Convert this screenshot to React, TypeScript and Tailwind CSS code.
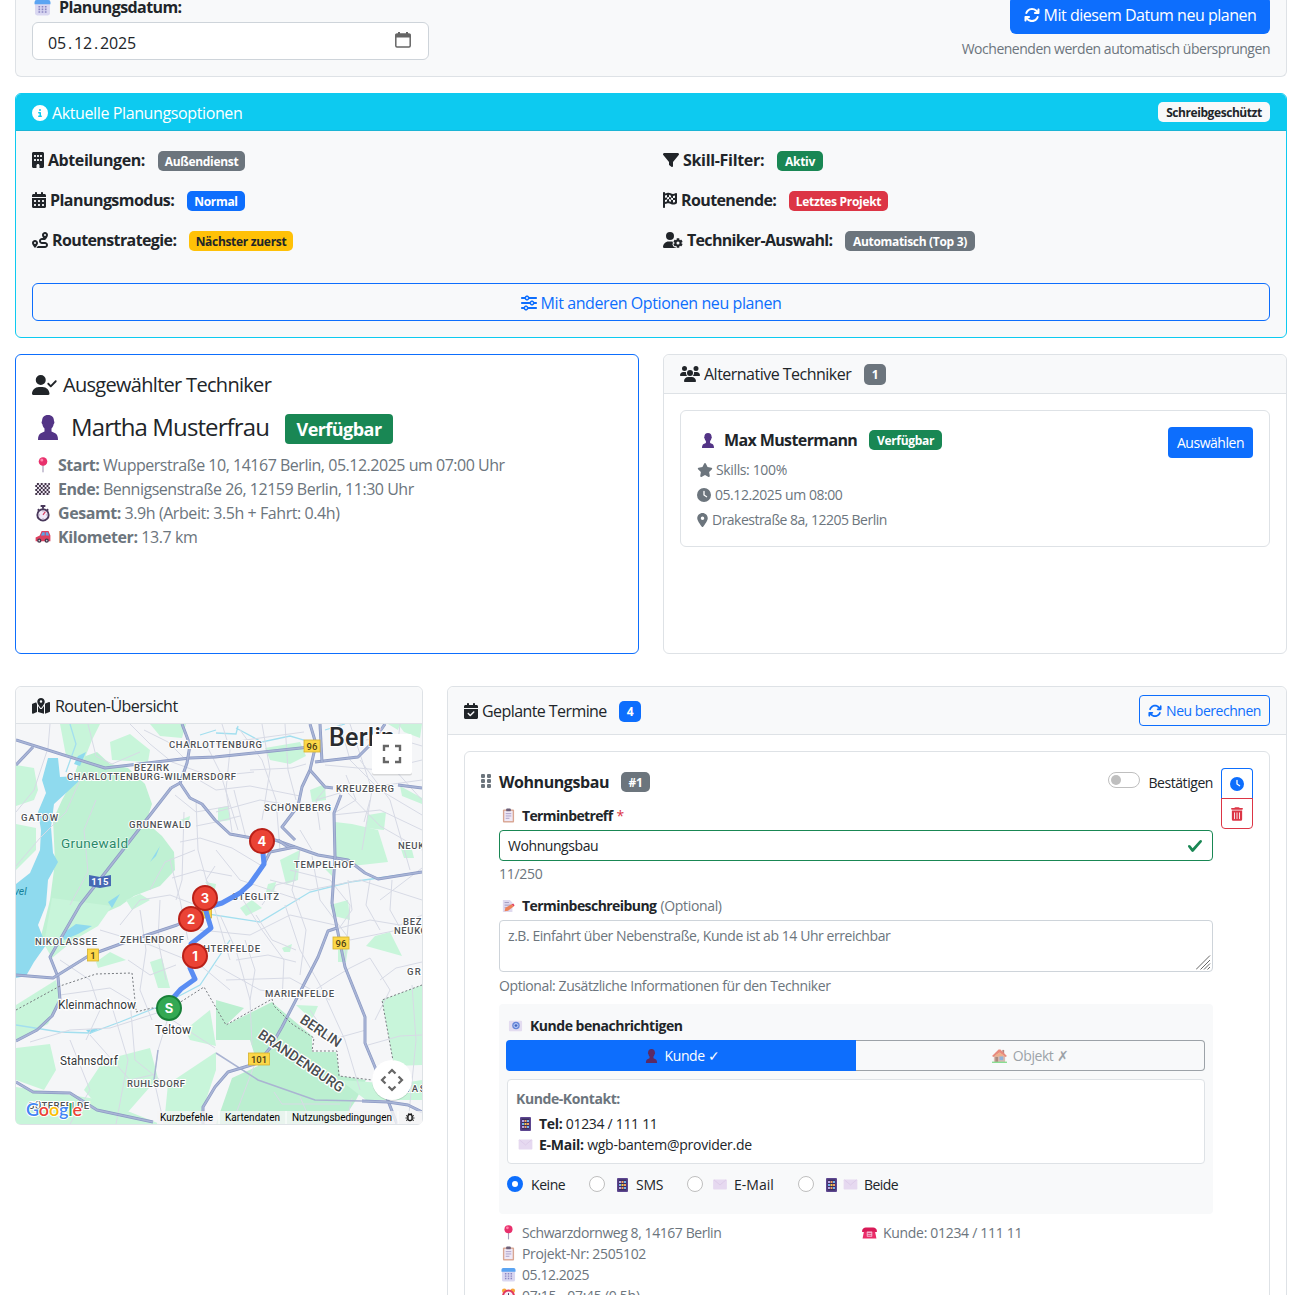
import React from 'react';
import {
    FaArrowsRotate, FaBuilding, FaCalendarCheck, FaCalendarDays, FaCircleInfo, FaClock, FaFilter, FaFlagCheckered,
    FaGripVertical, FaLocationDot, FaMapLocationDot, FaRoute, FaSliders, FaStar, FaTrashCan, FaUserCheck, FaUserGear, FaUsers,
} from 'react-icons/fa6';

interface EmojiProps {
    className?: string;
}

const CalendarEmoji: React.FC<EmojiProps> = ({ className }) => (
    <svg viewBox="0 0 16 16" className={className}>
        <rect x="1" y="1" width="14" height="14.500" rx="2" fill="#d9d7f1" />
        <path d="M0.500 5V3a2 2 0 0 1 2-2h11a2 2 0 0 1 2 2v2z" fill="#5ba4f2" />
        <path d="M5 6.500v7M8 6.500v7M11 6.500v7" stroke="#8a86c4" strokeWidth="1.600" strokeDasharray="1.500 1" fill="none" />
    </svg>
);

const PersonEmoji: React.FC<EmojiProps> = ({ className }) => (
    <svg viewBox="0 0 16 20" className={className}>
        <path d="M8 0c3.200 0 4.800 2 4.800 5 .6.300.4 1.800-.3 2.300-.3 1.700-.9 2.700-1.700 3.400v2.500l3 1.300C15.300 15.300 16 17 16 20H0c0-3 .7-4.700 2.200-5.500l3-1.300v-2.500C4.400 10 3.800 9 3.500 7.300c-.7-.5-.9-2-.3-2.300C3.200 2 4.800 0 8 0z" fill="currentColor" />
    </svg>
);

const PinEmoji: React.FC<EmojiProps> = ({ className }) => (
    <svg viewBox="0 0 16 16" className={className}>
        <path d="M7.400 8h1.200v6.500L8 16l-.6-1.500z" fill="#a9a0bd" />
        <circle cx="8" cy="4.500" r="4.300" fill="#e8306c" />
        <circle cx="6.800" cy="3" r="1.500" fill="#ff84ab" />
    </svg>
);

const FlagEmoji: React.FC<EmojiProps> = ({ className }) => (
    <svg viewBox="0 0 16 14" className={className}>
        <rect width="16" height="14" fill="#e8e1ee" />
        <path d="M1 1h15M-1 3.400h16M1 5.800h15M-1 8.200h16M1 10.600h15M-1 13h16" stroke="#413447" strokeWidth="2.400" strokeDasharray="2.200 2.200" />
    </svg>
);

const StopwatchEmoji: React.FC<EmojiProps> = ({ className }) => (
    <svg viewBox="0 0 16 18" className={className}>
        <path d="M5.500 1h5M8 1v3M2.500 4.500l1.500 1.500M13.500 4.500L12 6" stroke="#49385b" strokeWidth="2" fill="none" />
        <circle cx="8" cy="10.500" r="6" fill="#f0e8f8" stroke="#49385b" strokeWidth="2" />
        <path d="M8 6v1M12.500 10.500h-1M8 15v-1M3.500 10.500h1" stroke="#998bab" strokeWidth="1" />
        <path d="M8 10.500L10.500 7" stroke="#d43b5e" strokeWidth="1.200" />
    </svg>
);

const CarEmoji: React.FC<EmojiProps> = ({ className }) => (
    <svg viewBox="0 0 16 13" className={className}>
        <path d="M0 11V7l4.500-2L6.500 0H14l2 5v6z" fill="#dd4160" />
        <path d="M7.300 1.300h2.500V5H5.800zM11 1.300h2.300l1.300 3.700H11z" fill="#5ba6e8" />
        <circle cx="4" cy="10.500" r="2.300" fill="#41364d" />
        <circle cx="12" cy="10.500" r="2.300" fill="#41364d" />
        <circle cx="4" cy="10.500" r=".9" fill="#ccc" />
        <circle cx="12" cy="10.500" r=".9" fill="#ccc" />
    </svg>
);

const ClipboardEmoji: React.FC<EmojiProps> = ({ className }) => (
    <svg viewBox="0 0 14 16" className={className}>
        <rect x="1" y="1.500" width="12" height="14" rx="1" fill="#d9a693" />
        <rect x="2.500" y="3" width="9" height="11" fill="#efe8f6" />
        <rect x="4.500" y="0.500" width="5" height="3" rx="1" fill="#6d5f78" />
        <path d="M4 6h6M4 8.500h6M4 11h4" stroke="#a79dc6" strokeWidth="1" />
    </svg>
);

const MemoEmoji: React.FC<EmojiProps> = ({ className }) => (
    <svg viewBox="0 0 15 16" className={className}>
        <path d="M1 1h8l3 3v11H1z" fill="#dfd9ef" />
        <path d="M3 4h5M3 7h7M3 10h4" stroke="#9d94ba" strokeWidth="1" />
        <path d="M3 14l1-4 7-4 2.500 2.500-6.500 5z" fill="#ee8058" />
        <path d="M11 6l2-1 1.500 2-1 1.500z" fill="#e0405e" />
    </svg>
);

const AtMailEmoji: React.FC<EmojiProps> = ({ className }) => (
    <svg viewBox="0 0 16 12" className={className}>
        <rect x="1" y="0.500" width="14" height="11" rx="1" fill="#e3dcf0" />
        <circle cx="8.500" cy="5.500" r="4" fill="#6585d8" />
        <circle cx="8.500" cy="5.500" r="2.200" fill="none" stroke="#c5d4fa" strokeWidth=".9" />
        <circle cx="8.500" cy="5.500" r=".7" fill="#2b3f8f" />
    </svg>
);

const MailEmoji: React.FC<EmojiProps> = ({ className }) => (
    <svg viewBox="0 0 16 12" className={className}>
        <rect x="0.500" y="0.500" width="15" height="11" rx=".8" fill="#e6d9f0" />
        <path d="M1.500 1l6.500 5.500L14.500 1" stroke="#dccbe8" strokeWidth="1" fill="none" />
    </svg>
);

const PhoneEmoji: React.FC<EmojiProps> = ({ className }) => (
    <svg viewBox="0 0 11 14" className={className}>
        <rect width="11" height="14" rx="1" fill="#5d4690" />
        <rect x="1.500" y="1.500" width="8" height="11" fill="#3a2c5e" />
        <path d="M2 3h2v2H2zM2 9h2v2H2z" fill="#b9a5e6" />
        <path d="M4.500 3h2v2h-2zM7 6h2v2H7zM4.500 9h2v2h-2z" fill="#f0a069" />
        <path d="M7 3h2v2H7zM2 6h2v2H2zM7 9h2v2H7z" fill="#74b5f0" />
        <path d="M4.500 6h2v2h-2z" fill="#f2cb4c" />
    </svg>
);

const HouseEmoji: React.FC<EmojiProps> = ({ className }) => (
    <svg viewBox="0 0 16 15" className={className}>
        <path d="M2 7h12v7H2z" fill="#c99a8c" />
        <path d="M11 1h2v4h-2z" fill="#8d4b3f" />
        <path d="M0 7.500L7 .500h2l7 7-1.500 1L8 4l-6.500 4.500z" fill="#e0503c" />
        <path d="M2 8L8 3.500L14 8z" fill="#e88a55" />
        <path d="M8 8h4v4H8z" fill="#5b8fca" />
        <path d="M3.500 8.500h3V14h-3z" fill="#86513e" />
        <path d="M0 13.500h16V15H0z" fill="#4fd05c" />
    </svg>
);

const TelephoneEmoji: React.FC<EmojiProps> = ({ className }) => (
    <svg viewBox="0 0 16 13" className={className}>
        <path d="M0 4c0-2 2-3.500 4-3.500h8c2 0 4 1.500 4 3.500v1.500H0z" fill="#d81a57" />
        <path d="M2 5h12l1.500 7.500H.5z" fill="#ea2c68" />
        <rect x="5" y="5" width="6" height="5.500" rx=".5" fill="#f4b5cf" />
        <path d="M6 7h4M6 9h4" stroke="#d81a57" strokeWidth=".8" />
    </svg>
);

const AlarmEmoji: React.FC<EmojiProps> = ({ className }) => (
    <svg viewBox="0 0 16 16" className={className}>
        <circle cx="3.500" cy="3" r="2.500" fill="#f6a43a" />
        <circle cx="12.500" cy="3" r="2.500" fill="#f6a43a" />
        <circle cx="8" cy="8.500" r="5.800" fill="#f5eefa" stroke="#e2365f" strokeWidth="2.200" />
        <path d="M8 5.500v3l2 1" stroke="#46385a" strokeWidth="1" fill="none" />
    </svg>
);

interface BadgeProps {
    color: string;
    className?: string;
    children: React.ReactNode;
}

const Badge: React.FC<BadgeProps> = ({ color, className = '', children }) => (
    <span className={`inline-flex h-5 items-center justify-center rounded-[5px] pt-px text-xs font-bold tracking-[-0.026em] whitespace-nowrap ${color} ${className}`}>
        {children}
    </span>
);

interface OptionProps {
    icon: React.ReactNode;
    label: string;
    labelClass: string;
    badge: string;
    badgeClass: string;
}

const OPTIONS: OptionProps[] = [
    { icon: <FaBuilding className="h-4 w-3" />, label: 'Abteilungen:', labelClass: 'w-[97px] tracking-[-0.026em]', badge: 'Außendienst', badgeClass: 'w-[87px] bg-[#6c757d] text-white' },
    { icon: <FaFilter className="h-4 w-4" />, label: 'Skill-Filter:', labelClass: 'w-[81px] tracking-[-0.02em]', badge: 'Aktiv', badgeClass: 'w-[46px] bg-[#198754] text-white' },
    { icon: <FaCalendarDays className="h-4 w-3.5" />, label: 'Planungsmodus:', labelClass: 'w-[124px] tracking-[-0.034em]', badge: 'Normal', badgeClass: 'w-[58px] bg-[#0d6efd] text-white' },
    { icon: <FaFlagCheckered className="h-4 w-3.5" />, label: 'Routenende:', labelClass: 'w-[95px] tracking-[-0.038em]', badge: 'Letztes Projekt', badgeClass: 'w-[99px] bg-[#dc3545] text-white' },
    { icon: <FaRoute className="h-4 w-4" />, label: 'Routenstrategie:', labelClass: 'w-[124px] tracking-[-0.038em]', badge: 'Nächster zuerst', badgeClass: 'w-[104px] bg-[#ffc107] text-[#212529]' },
    { icon: <FaUserGear className="h-4 w-5" />, label: 'Techniker-Auswahl:', labelClass: 'w-[145px] tracking-[-0.042em]', badge: 'Automatisch (Top 3)', badgeClass: 'w-[130px] bg-[#6c757d] text-white' },
];

const MINOR_ROADS = [
    'M16 812L34 790L48 748L50 724', 'M16 866L40 838L66 812L80 780', 'M88 724L96 756L112 764L140 752', 'M70 905L88 872L84 830L96 800',
    'M130 724L150 744L172 762L210 776', 'M192 776L216 790L250 786L300 796', 'M196 800L198 850L212 900L230 960', 'M180 842L200 838L232 848L262 866',
    'M204 740L220 772L238 830', 'M222 724L230 750L226 790L232 832', 'M240 730L262 760L276 800L280 850', 'M216 744L260 738L304 732', 'M216 812L260 800L330 812',
    'M262 724L270 770L262 820', 'M316 800L350 790L422 780', 'M333 815L380 810L422 830', 'M345 790L380 826L422 850', 'M360 760L390 800L410 870',
    'M325 765L380 770L422 760', 'M340 724L350 760L380 790L422 815', 'M300 850L292 890L306 930L300 975', 'M312 856L320 900L350 940L422 925',
    'M270 880L310 890L360 880L422 900', 'M240 895L262 930L284 960L282 1000', 'M216 850L240 880L300 900', 'M285 724L288 770L296 800',
    'M170 860L180 900L188 940', 'M150 890L165 862L195 850', 'M120 925L140 900L170 895L196 905', 'M100 930L150 945L200 965L230 990',
    'M140 910L146 950L140 990L152 1020', 'M160 900L158 940L166 980', 'M60 995L110 988L130 1000L135 1060L160 1080', 'M60 960L90 980L100 1010L86 1040',
    'M30 1042L70 1030L110 1028L160 1012', 'M70 1040L90 1090L70 1124', 'M90 1035L130 1080L156 1074', 'M168 1018L158 1050L154 1080L164 1124',
    'M110 1000L128 1060L116 1124', 'M160 1012L215 1048', 'M220 915L236 950L250 1000L252 1045', 'M200 930L250 935L290 915L335 925',
    'M215 965L260 990L300 995', 'M340 928L370 920L400 925L422 915', 'M350 968L370 958L390 990L375 1020', 'M300 1000L330 980L350 968',
    'M285 905L300 950L320 985L345 1040L360 1090', 'M400 724L395 770L422 800', 'M368 1045L400 1036L422 1035', 'M310 1010L330 1040L366 1030',
    'M412 985L416 1040L408 1124', 'M254 1066L232 1124', 'M300 1097L312 1124', 'M352 1098L346 1124', 'M274 1092L282 1104L340 1104', 'M380 900L422 868',
    'M380 980L396 968L422 962', 'M245 940L255 970L250 1000', 'M226 980L290 978L330 1000', 'M290 870L330 880L350 905L345 960', 'M350 724L372 790L362 850',
    'M175 795L196 812L230 806', 'M184 812L182 880L176 900', 'M196 826L216 822L240 816', 'M215 866L206 880L216 892', 'M172 878L200 870L232 876',
    'M234 790L246 838', 'M250 770L292 768L306 764', 'M216 776L254 772', 'M320 830L316 800L326 788', 'M300 830L312 850', 'M348 880L352 910L338 930',
    'M370 880L366 905L380 930', 'M392 880L390 910L404 935', 'M366 740L388 736L422 746', 'M346 775L356 800L336 812', 'M370 800L364 822',
    'M262 905L276 885L296 880', 'M256 915L272 940L296 950', 'M236 960L268 955L296 962', 'M144 730L168 742L186 760', 'M128 960L150 975L176 965',
];

const GREEN_AREAS = [
    'M16 765L34 768L38 790L34 800L16 806z', 'M16 824L36 828L36 850L16 870z', 'M60 724L100 724L92 740L84 760L66 756z', 'M110 742L130 734L150 750L148 762L112 760z',
    'M150 724L186 724L182 738L160 736z', 'M265 748L300 742L306 756L290 764L270 760z', 'M335 822L352 824L378 830L388 862L352 866L335 858z',
    'M280 860L300 850L298 880L286 884z', 'M368 815L386 812L384 830L366 828z', 'M310 790L325 784L326 800L312 802z', 'M400 786L422 798L422 804L402 796z',
    'M398 724L422 724L420 738L404 732z', 'M400 846L410 842L414 858L404 858z', 'M375 936L390 932L402 956L366 946z', 'M330 905L348 900L350 920L334 916z',
    'M338 950L348 948L346 962L338 962z', 'M282 948L292 944L290 952L284 952z', 'M382 1000L422 985L422 1065L394 1066z',
    'M296 1005L318 1006L312 1020z', 'M16 1048L50 1044L56 1070L44 1090L16 1080z', 'M16 1087L90 1098L130 1112L160 1124L16 1124z', 'M104 1060L150 1048L158 1078L142 1096L128 1112L96 1104L84 1090z',
    'M168 1084L216 1052L216 1070L198 1124L164 1124z', 'M16 1005L56 980L60 1000L48 1024L16 1040z', 'M150 962L162 958L170 988L158 988z', 'M96 962L110 952L126 960L98 968z',
    'M185 1030L210 1010L216 1046L190 1040z', 'M126 900L140 894L150 900L132 910z', 'M340 1080L396 1084L422 1080L422 1100L366 1100z',
    'M52 898L112 906L98 926L74 940L52 958L44 944z', 'M218 808L228 806L230 820L218 822z', 'M180 820L190 816L188 826z', 'M268 884L276 882L274 892L266 892z',
    'M240 908L252 900L262 908L246 916z', 'M388 724L400 724L398 730z', 'M205 882L216 884L214 894z', 'M324 868L332 868L332 876z',
];

const HIGHWAYS = [
    'M16 740L105 768L190 758L215 757L310 747', 'M16 765L33 747', 'M171 788L126 846L80 905L50 957L58 977L60 1000L52 1016L37 1030L16 1041',
    'M182 724L190 745L187 763L180 783L171 788', 'M180 783L190 798L202 804L215 820L230 834L252 838L275 840L295 847L318 855L348 860L365 873L378 879L422 872',
    'M310 724L316 744L310 770L302 787L298 806L282 827L295 840', 'M310 770L325 787L333 788M341 795L334 813L335 857L332 903L337 928L345 967L365 1017L365 1043L375 1067L397 1124',
    'M315 762L358 757L372 743L385 724', 'M337 928L328 931L318 957L282 1027L270 1048L258 1063L228 1072L215 1087L203 1107L203 1124',
    'M16 975L53 978L90 955L123 943L177 925L206 910', 'M16 1082L33 1092L70 1093L97 1110L153 1122', 'M295 847L270 852L262 868', 'M278 840L288 847',
    'M362 1101L388 1102L408 1105L422 1112', 'M320 724L322 762', 'M398 785L422 788',
];

interface PlaceProps {
    x: number;
    y: number;
    w: number;
    children: React.ReactNode;
}

// District names, spaced out to the width they take on the map
const District: React.FC<PlaceProps> = ({ x, y, w, children }) => (
    <text x={x} y={y} textLength={w} fontSize="9.500" fontWeight="500" fill="#4f5256" stroke="#fff" strokeWidth="2" paintOrder="stroke">
        {children}
    </text>
);

const Town: React.FC<PlaceProps> = ({ x, y, w, children }) => (
    <text x={x} y={y} textLength={w} fontSize="12" fill="#333639" stroke="#fff" strokeWidth="2.500" paintOrder="stroke">
        {children}
    </text>
);

const Shield: React.FC<PlaceProps> = ({ x, y, w, children }) => (
    <g>
        <rect x={x - w / 2} y={y - 6} width={w} height="12" fill="#fcd748" stroke="#d5b12e" strokeWidth=".8" />
        <text x={x} y={y + 3.5} fontSize="9.500" fontWeight="500" fill="#4e4114" textAnchor="middle">{children}</text>
    </g>
);

const STOPS = [
    { x: 262, y: 841, label: '4' },
    { x: 205, y: 898, label: '3' },
    { x: 191, y: 919, label: '2' },
    { x: 195, y: 956, label: '1' },
];

const RouteMap: React.FC = () => (
    <svg viewBox="16 724 406 400" className="block h-[400px] w-[406px] rounded-b-[3px] font-[Roboto,sans-serif]">
        <rect x="16" y="724" width="406" height="400" fill="#f5f6f8" />
        <path d="M80 758L97 752L110 764L128 768L145 784L152 804L146 822L162 836L174 852L175 870L160 886L134 896L120 906L84 922L66 924L54 945L40 940L50 900L55 862L53 820L62 800L72 782z" fill="#bff1d3" />
        <path d="M216 1000L244 1008L226 1025L272 1002L274 1004L312 1036L312 1052L336 1052L340 1076L366 1080L356 1100L340 1124L216 1124L232 1078L258 1066L250 1040L216 1040z" fill="#bbefd0" />
        {GREEN_AREAS.map((d) => (
            <path key={d} d={d} fill="#c8f5da" />
        ))}
        <path d="M48 758H58L60 777L77 776L80 780L66 793L54 804L51 827L53 853L58 862L48 880L46 905L38 925L46 945L34 962L26 976L16 978V884L30 873L40 850L41 830L38 812L46 793L42 780z" fill="#8fdaee" />
        <path d="M78 756L86 752L80 766L74 764zM150 862L160 846L156 856L148 864zM108 902L120 894L112 908zM86 1030L100 1028L90 1034zM62 934L76 924L92 926L78 934L64 940z" fill="#8fdaee" />
        <path d="M70 724L76 744L66 772M216 733L236 734L238 726M236 728L262 742L290 736L304 740M325 730L345 724M16 1025L60 1032L90 1033L120 1022L160 1006L200 985L230 940M195 912L260 922L310 892L350 882L422 872M200 735L216 730" stroke="#a3dfef" strokeWidth="1.300" fill="none" />
        {MINOR_ROADS.map((d) => (
            <path key={d} d={d} fill="none" stroke="#d7dae5" strokeWidth="1" strokeLinejoin="round" />
        ))}
        <path d="M216 1053L258 1080L315 1100L362 1101M158 1050L154 1080" fill="none" stroke="#aab4d2" strokeWidth="1.500" />
        {HIGHWAYS.map((d) => (
            <g key={d} fill="none" strokeLinejoin="round">
                <path d={d} stroke="#8c9ac4" strokeWidth="3" />
                <path d={d} stroke="#a9b5d6" strokeWidth="1.600" />
            </g>
        ))}
        <path d="M16 1010L60 986L96 974L132 973L136 1010M136 1012L152 1008L168 1010L204 987L226 1025L272 999L274 1006L292 1024L314 1038L312 1051L337 1051L339 1076L372 1080M394 1066L382 1000L422 985" fill="none" stroke="#777b80" strokeWidth="1" strokeDasharray="2 2" />

        <text x="329" y="746" fontSize="25" textLength="66" fontWeight="500" fill="#2a2c2f" stroke="#fff" strokeWidth="2" paintOrder="stroke">Berlin</text>
        <District x={169} y={748} w={93}>CHARLOTTENBURG</District>
        <District x={134} y={771} w={35}>BEZIRK</District>
        <District x={67} y={780} w={169}>CHARLOTTENBURG-WILMERSDORF</District>
        <District x={336} y={792} w={58}>KREUZBERG</District>
        <District x={264} y={811} w={67}>SCHÖNEBERG</District>
        <District x={21} y={821} w={37}>GATOW</District>
        <District x={129} y={828} w={62}>GRUNEWALD</District>
        <District x={398} y={849} w={52}>NEUKÖLLN</District>
        <District x={294} y={868} w={60}>TEMPELHOF</District>
        <District x={232} y={900} w={47}>STEGLITZ</District>
        <District x={35} y={945} w={62}>NIKOLASSEE</District>
        <District x={120} y={943} w={64}>ZEHLENDORF</District>
        <District x={187} y={952} w={73}>LICHTERFELDE</District>
        <District x={403} y={925} w={35}>BEZIRK</District>
        <District x={394} y={934} w={52}>NEUKÖLLN</District>
        <District x={407} y={975} w={62}>GROPIUSST</District>
        <District x={265} y={997} w={69}>MARIENFELDE</District>
        <District x={127} y={1087} w={58}>RUHLSDORF</District>
        <District x={402} y={1092} w={31}>WASS</District>
        <District x={28} y={1109} w={61}>GÜTERFELDE</District>
        <text x="61" y="848" fontSize="13.500" textLength="67" fill="#2b8869" stroke="#e4faee" strokeWidth="1.500" paintOrder="stroke">Grunewald</text>
        <text x="14" y="895" fontSize="10.500" fontStyle="italic" fill="#168199">vel</text>
        <Town x={58} y={1009} w={78}>Kleinmachnow</Town>
        <Town x={155} y={1034} w={36}>Teltow</Town>
        <Town x={60} y={1065} w={58}>Stahnsdorf</Town>
        <g fontSize="14" fontWeight="500" fill="#4a4d50" stroke="#fff" strokeWidth="2.500" paintOrder="stroke">
            <text transform="translate(299 1022) rotate(34)" textLength="46">BERLIN</text>
            <text transform="translate(257 1037) rotate(34)" textLength="100">BRANDENBURG</text>
        </g>
        <path d="M89 875L100 877L111 875V886L100 888L89 886z" fill="#4669b4" />
        <text x="100" y="885" fontSize="9.500" fontWeight="700" fill="#fff" textAnchor="middle" letterSpacing=".4">115</text>
        <Shield x={312} y={746} w={16}>96</Shield>
        <Shield x={341} y={943} w={16}>96</Shield>
        <Shield x={93} y={955} w={11}>1</Shield>
        <Shield x={207} y={912} w={9}>1</Shield>
        <Shield x={259} y={1059} w={21}>101</Shield>

        <path d="M262 842L264 864L250 884L240 893L222 903L205 908L211 928L191 944L190 968L195 979L181 989L173 998L169 1008" fill="none" stroke="#5a8df3" strokeWidth="5" strokeLinejoin="round" />
        <g fontFamily="Inter" fontWeight="700" fontSize="13" textAnchor="middle">
            <circle cx="169" cy="1008" r="12" fill="#34a853" stroke="#188038" strokeWidth="2" />
            <text x="169" y="1012.500" fill="#fff">S</text>
            {[...STOPS].reverse().map((stop) => (
                <g key={stop.label}>
                    <circle cx={stop.x} cy={stop.y} r="12" fill="#ea4335" stroke="#b92018" strokeWidth="2" />
                    <text x={stop.x} y={stop.y + 4.5} fill="#fff">{stop.label}</text>
                </g>
            ))}
        </g>

        <rect x="372" y="735" width="40" height="40.500" rx="2" fill="#000" opacity=".12" />
        <rect x="372" y="734" width="40" height="40" rx="2" fill="#fff" />
        <path d="M384 751V746H389M395 746H400V751M400 757V762H395M389 762H384V757" fill="none" stroke="#666" strokeWidth="2.400" />
        <circle cx="392" cy="1081" r="20" fill="#000" opacity=".12" />
        <circle cx="392" cy="1080" r="20" fill="#fff" />
        <path d="M388.500 1073.500L392 1070L395.500 1073.500M388.500 1086.500L392 1090L395.500 1086.500M385.500 1076.500L382 1080L385.500 1083.500M398.500 1076.500L402 1080L398.500 1083.500" fill="none" stroke="#666" strokeWidth="2.200" />

        <rect x="157" y="1111" width="265" height="13" fill="#f5f5f5" opacity=".8" />
        <g fontSize="10" fill="#000">
            <text x="160" y="1121" textLength="53">Kurzbefehle</text>
            <text x="225" y="1121" textLength="55">Kartendaten</text>
            <text x="292" y="1121" textLength="100">Nutzungsbedingungen</text>
        </g>
        <path d="M219 1111V1124M286 1111V1124M398 1111V1124" stroke="#fff" strokeWidth="1" />
        <g fill="none" stroke="#111">
            <rect x="408" y="1114.500" width="4" height="6" rx="1.500" strokeWidth="1.300" />
            <path d="M406 1115.500L408 1116.500M414 1115.500L412 1116.500M405.500 1118H408M412 1118H414.500M406 1120.500L408 1119.500M414 1120.500L412 1119.500M408.500 1113L409.500 1114.500M411.500 1113L410.500 1114.500" strokeWidth=".9" />
        </g>
        <text x="26" y="1116" fontSize="18" fontWeight="600" textLength="56" fontFamily="Lato" stroke="#fff" strokeWidth="2" paintOrder="stroke">
            <tspan fill="#4285f4">G</tspan>
            <tspan fill="#ea4335">o</tspan>
            <tspan fill="#fbbc05">o</tspan>
            <tspan fill="#4285f4">g</tspan>
            <tspan fill="#34a853">l</tspan>
            <tspan fill="#ea4335">e</tspan>
        </text>
    </svg>
);

const PlanningDate: React.FC = () => (
    <div className="flex h-[77px] justify-between rounded-b-md border border-t-0 border-[#dee2e6] bg-[#f8f9fa] px-4">
        <div>
            <div className="-mt-[5px] flex h-6 items-center pl-[2px] font-bold">
                <CalendarEmoji className="mr-2 h-[17px] w-[17px]" />
                <span className="tracking-[-0.036em]">Planungsdatum:</span>
            </div>
            <div className="mt-[3px] flex h-[38px] w-[397px] items-center justify-between rounded-md border border-[#ced4da] bg-white pr-[17px] pl-[15px]">
                <span className="pt-[3px] tracking-[-0.01em] [word-spacing:-2px]">05 . 12 . 2025</span>
                <svg viewBox="0 0 16 16" className="-mt-[2px] h-4 w-4">
                    <rect x=".8" y="2" width="14.400" height="13" rx="1.200" fill="none" stroke="#666" strokeWidth="1.500" />
                    <path d="M.5 2H15.500V5.500H.5zM3 0h2v3H3zM11 0h2v3h-2z" fill="#666" />
                </svg>
            </div>
        </div>
        <div className="flex flex-col items-end">
            <button className="-mt-1 flex h-[38px] w-[260px] items-center justify-center gap-1 rounded-md bg-[#0d6efd] text-white">
                <FaArrowsRotate className="h-4 w-4" />
                <span className="tracking-[-0.03em]">Mit diesem Datum neu planen</span>
            </button>
            <span className="mt-[5px] text-sm tracking-[-0.034em] text-[#6c757d]">Wochenenden werden automatisch übersprungen</span>
        </div>
    </div>
);

const PlanningOptions: React.FC = () => (
    <div className="mt-4 h-[245px] rounded-md border border-[#0dcaf0] bg-[#f8f9fa]">
        <div className="flex h-[37px] items-center justify-between rounded-t-[5px] border-b border-[#1bb5d5] bg-[#0dcaf0] px-4 text-white">
            <span className="flex items-center gap-1 pt-[2px]">
                <FaCircleInfo className="h-4 w-4" />
                <span className="tracking-[-0.024em]">Aktuelle Planungsoptionen</span>
            </span>
            <Badge color="bg-[#f8f9fa] text-[#212529]" className="w-[112px] tracking-[-0.036em]">Schreibgeschützt</Badge>
        </div>
        <div className="px-4 pt-[17px]">
            <div className="grid grid-cols-[631px_1fr] gap-y-4">
                {OPTIONS.map((option) => (
                    <div key={option.label} className="flex h-6 items-center">
                        {option.icon}
                        <span className={`ml-1 font-bold whitespace-nowrap ${option.labelClass}`}>{option.label}</span>
                        <Badge color={option.badgeClass} className="mt-[2px] ml-[13px]">{option.badge}</Badge>
                    </div>
                ))}
            </div>
            <button className="mt-[31px] flex h-[38px] w-full items-center justify-center gap-1 rounded-md border border-[#0d6efd] pt-[2px] text-[#0d6efd]">
                <FaSliders className="h-4 w-4" />
                <span className="tracking-[-0.026em]">Mit anderen Optionen neu planen</span>
            </button>
        </div>
    </div>
);

const SelectedTechnician: React.FC = () => (
    <div className="h-[300px] w-[624px] rounded-md border border-[#0d6efd] px-4 pt-4">
        <div className="flex h-7 items-center text-xl">
            <FaUserCheck className="mr-[6px] h-5 w-[25px]" />
            <span className="tracking-[-0.035em]">Ausgewählter Techniker</span>
        </div>
        <div className="mt-[10px] flex h-9 items-center">
            <PersonEmoji className="ml-[5px] h-[25px] w-[22px] text-[#533486]" />
            <span className="ml-[12px] w-[198px] text-2xl tracking-[-0.037em] whitespace-nowrap">Martha Musterfrau</span>
            <span className="mt-[3px] ml-4 flex h-[30px] w-[108px] items-center justify-center rounded bg-[#198754] text-lg font-bold tracking-[-0.03em] text-white">
                Verfügbar
            </span>
        </div>
        <div className="mt-2 leading-6 tracking-[-0.03em] text-[#6c757d]">
            <div className="flex items-center">
                <PinEmoji className="mr-[7px] ml-[3px] h-4 w-4" />
                <span><b>Start:</b> Wupperstraße 10, 14167 Berlin, 05.12.2025 um 07:00 Uhr</span>
            </div>
            <div className="flex items-center">
                <FlagEmoji className="mr-[7px] ml-[3px] h-3 w-4" />
                <span><b>Ende:</b> Bennigsenstraße 26, 12159 Berlin, 11:30 Uhr</span>
            </div>
            <div className="flex items-center">
                <StopwatchEmoji className="mr-[7px] ml-[3px] h-[17px] w-4" />
                <span className="tracking-[-0.027em]"><b>Gesamt:</b> 3.9h (Arbeit: 3.5h + Fahrt: 0.4h)</span>
            </div>
            <div className="flex items-center">
                <CarEmoji className="mr-[7px] ml-[3px] h-3 w-4" />
                <span className="tracking-[-0.026em]"><b>Kilometer:</b> 13.7 km</span>
            </div>
        </div>
    </div>
);

const AlternativeTechnicians: React.FC = () => (
    <div className="h-[300px] w-[624px] rounded-md border border-[#dee2e6]">
        <div className="flex h-[39px] items-center rounded-t-md border-b border-[#dee2e6] bg-[#f8f9fa] px-4">
            <FaUsers className="h-4 w-5" />
            <span className="ml-1 w-[148px] whitespace-nowrap">Alternative Techniker</span>
            <Badge color="bg-[#6c757d] text-white" className="mt-px ml-3 h-[21px] w-[22px]">1</Badge>
        </div>
        <div className="m-4 flex h-[137px] items-start justify-between rounded-md border border-[#dee2e6] p-4">
            <div>
                <div className="mt-px flex h-6 items-center">
                    <PersonEmoji className="ml-1 h-[15px] w-[14px] text-[#533486]" />
                    <span className="ml-[9px] w-[133px] font-bold tracking-[-0.038em] whitespace-nowrap">Max Mustermann</span>
                    <Badge color="bg-[#198754] text-white" className="ml-3 w-[73px]">Verfügbar</Badge>
                </div>
                <div className="mt-[5px] text-sm leading-[25px] tracking-[-0.026em] text-[#6c757d]">
                    <div className="flex items-center gap-[3px]"><FaStar className="h-[14px] w-4" />Skills: 100%</div>
                    <div className="flex items-center gap-1 tracking-[-0.032em]"><FaClock className="h-[14px] w-[14px]" />05.12.2025 um 08:00</div>
                    <div className="flex items-center gap-1 tracking-[-0.037em]"><FaLocationDot className="h-[14px] w-[11px]" />Drakestraße 8a, 12205 Berlin</div>
                </div>
            </div>
            <button className="h-[31px] w-[85px] rounded bg-[#0d6efd] pt-px text-sm tracking-[-0.034em] text-white">Auswählen</button>
        </div>
    </div>
);

const NotifyBox: React.FC = () => (
    <div className="mt-2 h-[210px] rounded bg-[#f8f9fa] pt-[11px] pr-2 pl-[7px]">
        <div className="flex h-[21px] items-center font-bold tracking-[-0.034em]">
            <AtMailEmoji className="mr-[7px] ml-[2px] h-[12px] w-[15px]" />
            <span>Kunde benachrichtigen</span>
        </div>
        <div className="mt-1 flex h-[31px]">
            <button className="flex w-[350px] items-center justify-center rounded-l bg-[#0d6efd] pl-[2px] text-white">
                <PersonEmoji className="mr-[7px] h-[14px] w-[13px] text-[#5c2a63]" />
                Kunde ✓
            </button>
            <button className="flex flex-1 items-center justify-center rounded-r border border-l-0 border-[#6c757d] text-[#6c757d] opacity-65">
                <HouseEmoji className="mr-[6px] h-[14px] w-[15px]" />
                Objekt ✗
            </button>
        </div>
        <div className="mt-2 ml-px h-[85px] rounded border border-[#dee2e6] bg-white pt-2 pl-2">
            <div className="font-bold tracking-[-0.03em] text-[#6c757d]">Kunde-Kontakt:</div>
            <div className="mt-1 flex items-center tracking-[-0.022em]">
                <PhoneEmoji className="mr-2 ml-1 h-[14px] w-[11px]" />
                <span><b>Tel:</b> 01234 / 111 11</span>
            </div>
            <div className="flex items-center tracking-[-0.018em]">
                <MailEmoji className="mr-[6px] ml-[2px] h-[11px] w-[15px]" />
                <span><b>E-Mail:</b> wgb-bantem@provider.de</span>
            </div>
        </div>
        <div className="mt-[9px] flex h-[22px] items-center">
            <span className="ml-px h-4 w-4 rounded-full border-[5px] border-[#0d6efd] bg-white" />
            <span className="ml-2 w-[58px] pt-px">Keine</span>
            <span className="h-4 w-4 rounded-full border border-[#bfbfbf] bg-white" />
            <PhoneEmoji className="mt-px ml-3 h-[14px] w-[11px]" />
            <span className="ml-2 w-[51px] pt-px tracking-[-0.02em]">SMS</span>
            <span className="h-4 w-4 rounded-full border border-[#bfbfbf] bg-white" />
            <MailEmoji className="mt-px ml-[9px] h-[11px] w-4" />
            <span className="ml-[6px] w-[64px] pt-px tracking-[0em]">E-Mail</span>
            <span className="h-4 w-4 rounded-full border border-[#bfbfbf] bg-white" />
            <PhoneEmoji className="mt-px ml-3 h-[14px] w-[11px]" />
            <MailEmoji className="mt-px ml-[6px] h-[11px] w-[15px]" />
            <span className="ml-[6px] pt-px tracking-[-0.04em]">Beide</span>
        </div>
    </div>
);

const AppointmentForm: React.FC = () => (
    <div className="w-[714px] text-sm leading-[21px] tracking-[-0.031em]">
        <div className="flex h-7 items-center">
            <span className="w-[109px] text-base font-bold">Wohnungsbau</span>
            <Badge color="bg-[#6c757d] text-white" className="ml-[13px] w-[29px]">#1</Badge>
            <span className="-mt-1 ml-auto flex h-4 w-8 items-center rounded-full border border-[#bfbfbf] pl-[2px]">
                <span className="h-[10px] w-[10px] rounded-full bg-[#bfbfbf]" />
            </span>
            <span className="ml-2 w-[65px] text-right">Bestätigen</span>
        </div>
        <div className="mt-2 flex h-[22px] items-center">
            <ClipboardEmoji className="mr-[7px] ml-[3px] h-[15px] w-[13px]" />
            <b className="tracking-[-0.045em]">Terminbetreff</b>
            <span className="ml-1 text-[#dc3545]">*</span>
        </div>
        <div className="mt-1 flex h-[31px] items-center justify-between rounded border border-[#198754] pr-[9px] pl-2">
            Wohnungsbau
            <svg viewBox="0 0 8 8" className="h-4 w-4">
                <path fill="#198754" d="M2.300 6.730.6 4.530c-.4-1.040.46-1.400 1.100-.8l1.100 1.400 3.400-3.800c.6-.63 1.600-.27 1.200.7l-4 4.600c-.43.500-.8.400-1.100.1z" />
            </svg>
        </div>
        <div className="mt-[2px] tracking-[-0.02em] text-[#6c757d]">11/250</div>
        <div className="mt-[11px] flex items-center">
            <MemoEmoji className="mr-[7px] ml-[3px] h-[14px] w-[13px]" />
            <b className="tracking-[-0.04em]">Terminbeschreibung</b>
            <span className="ml-1 tracking-[-0.024em] text-[#6c757d]">(Optional)</span>
        </div>
        <div className="relative mt-1 h-[52px] rounded border border-[#ced4da] px-2 pt-1 text-[#6c757d]">
            z.B. Einfahrt über Nebenstraße, Kunde ist ab 14 Uhr erreichbar
            <svg viewBox="0 0 15 15" className="absolute right-px bottom-px h-[15px] w-[15px]">
                <path d="M0 14.500L14 .5M4.500 14.500L14 5M8 14.500L14 8.500M11.500 14.500L14 12" stroke="#666" strokeWidth="1" />
            </svg>
        </div>
        <div className="mt-[3px] tracking-[-0.029em] text-[#6c757d]">Optional: Zusätzliche Informationen für den Techniker</div>
        <NotifyBox />
        <div className="mt-2 grid grid-cols-[363px_1fr] text-[#6c757d]">
            <div>
                <div className="flex items-center"><PinEmoji className="mr-[6px] ml-[2px] h-[15px] w-[15px]" />Schwarzdornweg 8, 14167 Berlin</div>
                <div className="flex items-center tracking-[-0.024em]"><ClipboardEmoji className="mr-[7px] ml-[3px] h-[15px] w-[13px]" />Projekt-Nr: 2505102</div>
                <div className="flex items-center"><CalendarEmoji className="mr-[6px] ml-[2px] h-[15px] w-[15px]" />05.12.2025</div>
                <div className="flex items-center tracking-[-0.02em]"><AlarmEmoji className="mr-[6px] ml-[2px] h-[15px] w-[15px]" />07:15 - 07:45 (0.5h)</div>
            </div>
            <div className="flex h-[21px] items-center tracking-[-0.022em]"><TelephoneEmoji className="mr-[6px] h-3 w-[15px]" />Kunde: 01234 / 111 11</div>
        </div>
    </div>
);

const PlannedAppointments: React.FC = () => (
    <div className="h-[640px] w-[840px] rounded-md border border-[#dee2e6]">
        <div className="flex h-12 items-center rounded-t-md border-b border-[#dee2e6] bg-[#f8f9fa] px-4">
            <FaCalendarCheck className="h-4 w-3.5" />
            <span className="ml-1 w-[125px] tracking-[-0.036em] whitespace-nowrap">Geplante Termine</span>
            <Badge color="bg-[#0d6efd] text-white" className="mt-px ml-3 h-[21px] w-[22px]">4</Badge>
            <button className="ml-auto flex h-[31px] w-[131px] items-center justify-center gap-1 rounded border border-[#0d6efd] pt-px text-sm tracking-[-0.034em] text-[#0d6efd]">
                <FaArrowsRotate className="h-[14px] w-[14px]" />
                Neu berechnen
            </button>
        </div>
        <div className="mx-4 mt-4 flex h-[620px] rounded-md border border-[#dee2e6] pt-4 pl-4">
            <FaGripVertical className="mt-[5px] mr-2 h-4 w-[10px] text-[#6c757d]" />
            <AppointmentForm />
            <div className="ml-2 w-8">
                <button className="flex h-[31px] w-8 items-center justify-center rounded-t border border-b-0 border-[#0d6efd] text-[#0d6efd]">
                    <FaClock className="h-[14px] w-[14px]" />
                </button>
                <button className="-mt-px flex h-[31px] w-8 items-center justify-center rounded-b border border-[#dc3545] text-[#dc3545]">
                    <FaTrashCan className="h-[14px] w-3" />
                </button>
            </div>
        </div>
    </div>
);

const App: React.FC = () => {
    return (
        <div className="h-[1295px] w-[1309px] overflow-hidden bg-white pr-[22px] pl-[15px] font-['Open_Sans',sans-serif] tracking-[-0.032em] text-[#212529]">
            <PlanningDate />
            <PlanningOptions />
            <div className="mt-4 flex justify-between">
                <SelectedTechnician />
                <AlternativeTechnicians />
            </div>
            <div className="mt-8 flex items-start justify-between">
                <div className="w-[408px] rounded-md border border-[#dee2e6]">
                    <div className="flex h-[37px] items-center rounded-t-md border-b border-[#dee2e6] bg-[#f8f9fa] px-4 pt-[2px]">
                        <FaMapLocationDot className="h-4 w-[18px]" />
                        <span className="ml-[5px]">Routen-Übersicht</span>
                    </div>
                    <div className="tracking-normal">
                        <RouteMap />
                    </div>
                </div>
                <PlannedAppointments />
            </div>
        </div>
    );
};

export default App;
